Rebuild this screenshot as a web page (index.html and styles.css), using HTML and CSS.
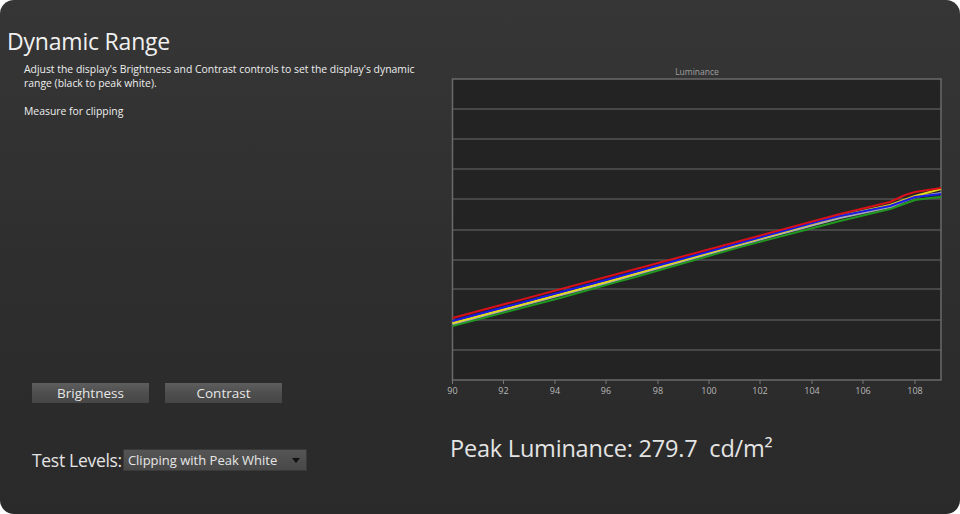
FILE: index.html
```html
<!DOCTYPE html>
<html>
<head>
<meta charset="utf-8">
<link rel="stylesheet" href="styles.css">
</head>
<body>
<div class="window">
  <div class="left">
    <h1 class="title">Dynamic Range</h1>
    <div class="desc">
      <p>Adjust the display's Brightness and Contrast controls to set the display's dynamic range (black to peak white).</p>
      <p>Measure for clipping</p>
    </div>
    <div class="buttons">
      <button class="btn">Brightness</button>
      <button class="btn">Contrast</button>
    </div>
    <div class="levels">
      <span class="levels-label">Test Levels:</span>
      <div class="select"><span>Clipping with Peak White</span><span class="arrow"></span></div>
    </div>
  </div>
  <div class="right">
    <svg class="chart" width="520" height="330" viewBox="0 0 520 330">
      <text x="257" y="9" class="ctitle" text-anchor="middle">Luminance</text>
      <rect x="12.5" y="13" width="488.5" height="301" fill="#232323"/>
      <g stroke="#555" stroke-width="1.5">
        <line x1="12.5" y1="43" x2="501" y2="43"/>
        <line x1="12.5" y1="73" x2="501" y2="73"/>
        <line x1="12.5" y1="103" x2="501" y2="103"/>
        <line x1="12.5" y1="133" x2="501" y2="133"/>
        <line x1="12.5" y1="164" x2="501" y2="164"/>
        <line x1="12.5" y1="194" x2="501" y2="194"/>
        <line x1="12.5" y1="223" x2="501" y2="223"/>
        <line x1="12.5" y1="254" x2="501" y2="254"/>
        <line x1="12.5" y1="284" x2="501" y2="284"/>
      </g>
      <rect x="12.5" y="13" width="488.5" height="301" fill="none" stroke="#6a6a6a" stroke-width="1.5"/>
      <g stroke="#777" stroke-width="1">
        <line x1="12.5" y1="314" x2="12.5" y2="318"/>
        <line x1="63.5" y1="314" x2="63.5" y2="318"/>
        <line x1="115" y1="314" x2="115" y2="318"/>
        <line x1="166" y1="314" x2="166" y2="318"/>
        <line x1="218" y1="314" x2="218" y2="318"/>
        <line x1="269" y1="314" x2="269" y2="318"/>
        <line x1="320" y1="314" x2="320" y2="318"/>
        <line x1="372" y1="314" x2="372" y2="318"/>
        <line x1="423" y1="314" x2="423" y2="318"/>
        <line x1="475" y1="314" x2="475" y2="318"/>
      </g>
      <g class="axis" text-anchor="middle">
        <text x="12.5" y="327.5">90</text>
        <text x="63.5" y="327.5">92</text>
        <text x="115" y="327.5">94</text>
        <text x="166" y="327.5">96</text>
        <text x="218" y="327.5">98</text>
        <text x="269" y="327.5">100</text>
        <text x="320" y="327.5">102</text>
        <text x="372" y="327.5">104</text>
        <text x="423" y="327.5">106</text>
        <text x="475" y="327.5">108</text>
      </g>
      <g fill="none" stroke-width="2" stroke-linejoin="round">
        <polyline stroke="#1f9a1f" points="12.5,260 120,232 166,219 180,215 192,212 300,181 400,155 450,143 475,134 490,132 501,131"/>
        <polyline stroke="#a8a8b8" points="12.5,258 166,217 300,179 400,152 450,141 475,131 501,127"/>
        <polyline stroke="#e6d81a" points="12.5,257 166,216 300,178 400,150 450,139 475,130 501,123"/>
        <polyline stroke="#1a1ae6" points="12.5,255 166,214 300,177 380,155 400,150 450,140 475,131 501,128"/>
        <polyline stroke="#d8101a" points="12.5,252 166,211 300,175 400,148 450,136 465,129 475,126 501,122"/>
      </g>
    </svg>
    <div class="peak">Peak Luminance: 279.7&nbsp;&nbsp;cd/m²</div>
  </div>
</div>
</body>
</html>
```

FILE: styles.css
```css
html, body {
  margin: 0;
  padding: 0;
  background: #ffffff;
}
.window {
  width: 960px;
  height: 514px;
  border-radius: 14px;
  background: linear-gradient(to bottom, #363636 0%, #2d2d2d 60%, #2a2a2a 100%);
  display: flex;
  overflow: hidden;
  font-family: "Open Sans", "Noto Sans", sans-serif;
  color: #e8e8e8;
}
.left {
  width: 440px;
  display: flex;
  flex-direction: column;
}
.title {
  margin: 26px 0 0 7px;
  font-size: 23px;
  font-weight: 400;
  line-height: 30px;
  color: #f0f0f0;
  letter-spacing: -0.2px;
}
.desc {
  margin: 6px 0 0 24px;
  width: 400px;
  font-size: 10.4px;
  line-height: 14px;
  color: #eeeeee;
}
.desc p {
  margin: 0 0 14px 0;
}
.buttons {
  display: flex;
  gap: 14px;
  margin: 250px 0 0 31px;
}
.btn {
  width: 119px;
  height: 22px;
  padding: 0;
  border: 1px solid #2b2b2b;
  background: linear-gradient(to bottom, #5e5e5e 0%, #4e4e4e 50%, #464646 100%);
  color: #e6e6e6;
  font-family: "Open Sans", "Noto Sans", sans-serif;
  font-size: 13.5px;
  line-height: 20px;
}
.levels {
  display: flex;
  align-items: center;
  height: 24px;
  margin: 44px 0 0 32px;
}
.levels-label {
  font-size: 17.5px;
  color: #e4e4e4;
  letter-spacing: -0.3px;
}
.select {
  margin-left: 1px;
  width: 184px;
  height: 22px;
  box-sizing: border-box;
  display: flex;
  align-items: center;
  justify-content: space-between;
  padding: 0 6px 0 4px;
  background: linear-gradient(to bottom, #555555, #484848);
  border: 1px solid #3a3a3a;
  font-size: 13px;
  color: #e6e6e6;
}
.arrow {
  width: 0;
  height: 0;
  border-left: 4px solid transparent;
  border-right: 4px solid transparent;
  border-top: 5px solid #111;
}
.right {
  flex: 1;
  display: flex;
  flex-direction: column;
  padding-top: 66px;
}
.chart {
  display: block;
}
.ctitle {
  font-family: "Open Sans", sans-serif;
  font-size: 8.5px;
  fill: #a0a0a0;
}
.axis text {
  font-family: "Open Sans", sans-serif;
  font-size: 9px;
  fill: #b8b8b8;
}
.peak {
  margin: 36px 0 0 10px;
  font-size: 23.5px;
  color: #e4e4e4;
  letter-spacing: -0.2px;
}
```
